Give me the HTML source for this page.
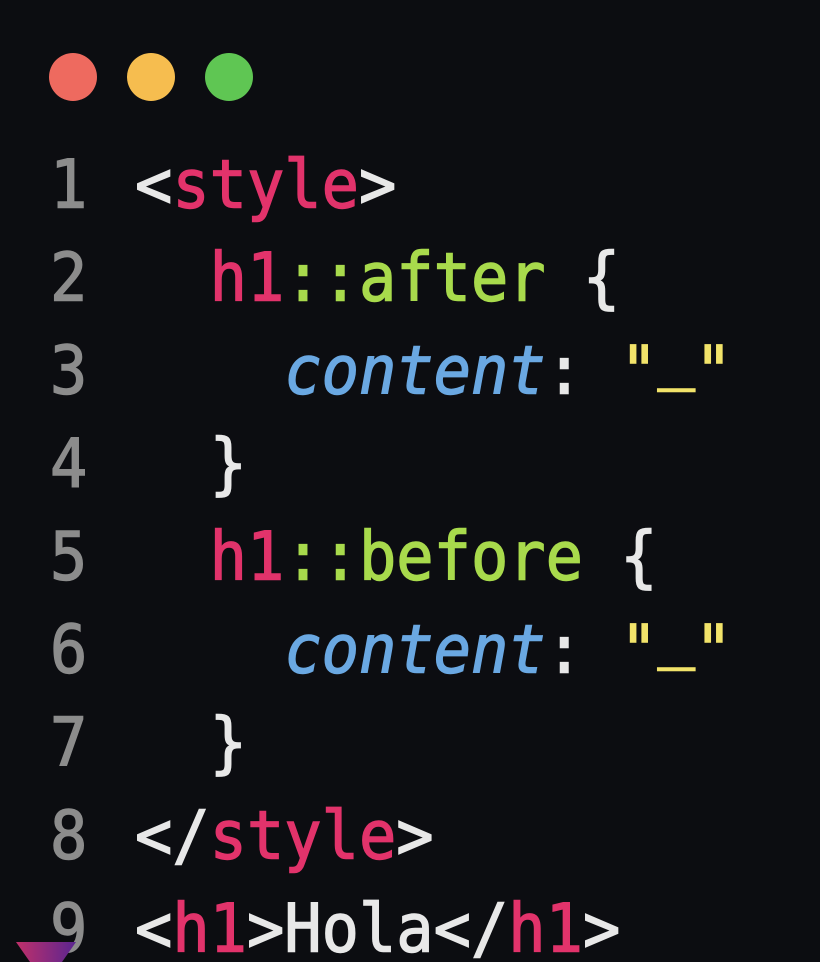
<!DOCTYPE html>
<html><head><style>
html,body{margin:0;padding:0;background:#0c0d11;width:820px;height:962px;overflow:hidden;position:relative}
.dot{position:absolute;top:53px;width:48px;height:48px;border-radius:50%}
.ln,.cd{position:absolute;font:62px "DejaVu Sans Mono","Liberation Mono",monospace;line-height:80px;transform:scaleY(1.08);transform-origin:0 50%;-webkit-text-stroke:1.3px currentColor}
.ln{left:50px;color:#8c8c8c}
.cd{left:135px;color:#e8e8e8;white-space:pre}
.p{color:#e2336b}.g{color:#a8da4c}.b{color:#6aa8e2;font-style:italic}.y{color:#f2e36a}
.u{display:inline-block;transform:translateY(-17px)}
</style></head><body>
<div class="dot" style="left:49px;background:#ee6a5f"></div>
<div class="dot" style="left:127px;background:#f6bd4f"></div>
<div class="dot" style="left:205px;background:#5fc653"></div>
<div class="ln" style="top:145px">1</div><div class="cd" style="top:145px">&lt;<span class="p">style</span>&gt;</div>
<div class="ln" style="top:238px">2</div><div class="cd" style="top:238px">  <span class="p">h1</span><span class="g">::after</span> {</div>
<div class="ln" style="top:331px">3</div><div class="cd" style="top:331px">    <span class="b">content</span>: <span class="y">"<span class="u">_</span>"</span></div>
<div class="ln" style="top:424px">4</div><div class="cd" style="top:424px">  }</div>
<div class="ln" style="top:517px">5</div><div class="cd" style="top:517px">  <span class="p">h1</span><span class="g">::before</span> {</div>
<div class="ln" style="top:610px">6</div><div class="cd" style="top:610px">    <span class="b">content</span>: <span class="y">"<span class="u">_</span>"</span></div>
<div class="ln" style="top:703px">7</div><div class="cd" style="top:703px">  }</div>
<div class="ln" style="top:796px">8</div><div class="cd" style="top:796px">&lt;/<span class="p">style</span>&gt;</div>
<div class="ln" style="top:889px">9</div><div class="cd" style="top:889px">&lt;<span class="p">h1</span>&gt;Hola&lt;/<span class="p">h1</span>&gt;</div>
<svg style="position:absolute;left:0;top:0" width="820" height="962"><defs><linearGradient id="gr" x1="0" x2="1"><stop offset="0" stop-color="#c0306a"/><stop offset="1" stop-color="#5a2590"/></linearGradient></defs><polygon points="16,942 76,942 62,962 30,962" fill="url(#gr)"/></svg>
</body></html>
